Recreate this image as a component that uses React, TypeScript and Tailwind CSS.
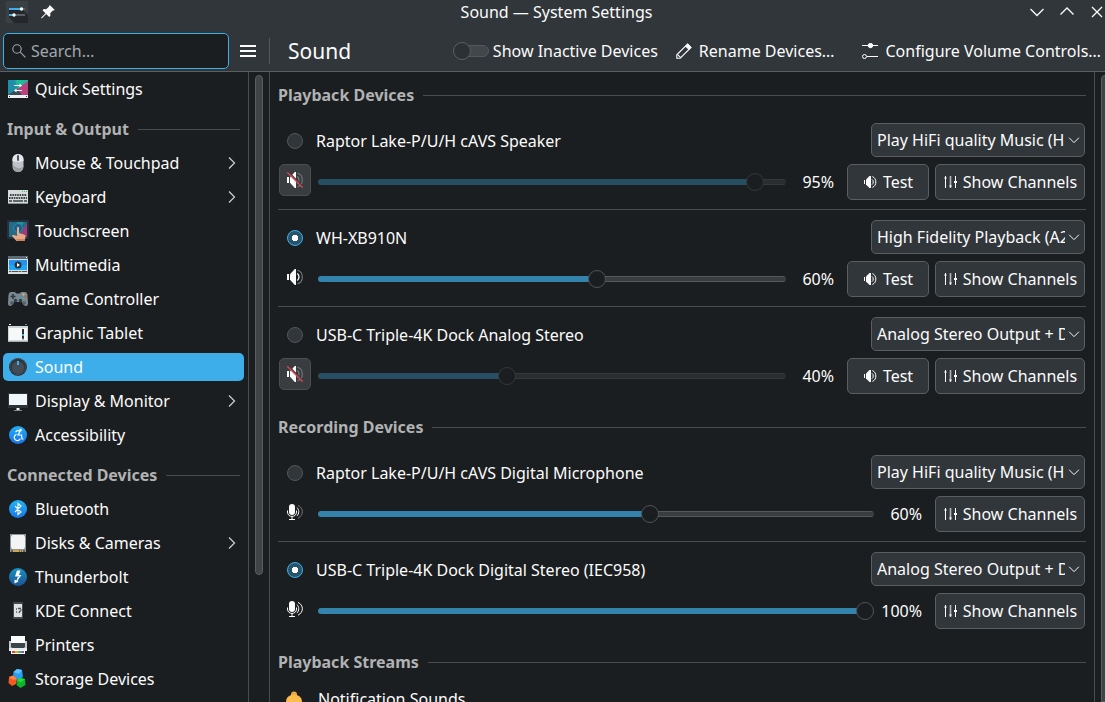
import React, { useState } from 'react';
import clsx from 'clsx';

type IconProps = { className?: string };

/* ---------- monochrome icons ---------- */

const Chevron = ({ dir }: { dir: 'up' | 'down' | 'right' }) => {
  const paths = {
    up: 'M1.5 10.5 8 4l6.5 6.5',
    down: 'M1.5 5 8 11.5 14.5 5',
    right: 'M5 2.5 10.5 8 5 13.5',
  };
  return (
    <svg viewBox="0 0 16 16" className="w-full h-full" fill="none" stroke="currentColor" strokeWidth="1.3">
      <path d={paths[dir]} />
    </svg>
  );
};

const PinIcon = () => (
  <svg viewBox="0 0 16 16" className="w-4 h-4" fill="#fcfcfc">
    <path d="M10 1.2 14.8 6l-1.3.6-.6-.2-2.7 2.8.2 2.5-1.2 1.2-3-3L2 14.2l-.8.1.1-.8 4.2-4.3-3-3 1.3-1.2 2.4.2 2.9-2.8-.2-.6Z" />
  </svg>
);

const PencilIcon = () => (
  <svg viewBox="0 0 16 16" className="w-4 h-4" fill="none" stroke="#fcfcfc" strokeWidth="1.1">
    <path d="M.8 15.2v-3.4L11.6 1 15 4.4 4.2 15.2H.8Z" />
    <path d="m9.6 3 3.4 3.4M1.6 11.6l2.8 2.8" />
    <path d="m11.8 1.4 2.8 2.8-1.4 1.5-2.9-2.8z" fill="#fcfcfc" />
  </svg>
);

const ConfigureIcon = () => (
  <svg viewBox="0 0 16 16" className="w-4 h-4" fill="none" stroke="#fcfcfc">
    <path d="M0 2.5h16M5 13.5h11" />
    <circle cx="8.5" cy="2.5" r="2.2" fill="#fcfcfc" />
    <circle cx="2.5" cy="13.5" r="2" />
  </svg>
);

const SearchIcon = ({ className }: IconProps) => (
  <svg viewBox="0 0 16 16" className={className} fill="none" stroke="currentColor" strokeWidth="1.1">
    <circle cx="6" cy="6" r="4.2" />
    <path d="m9.2 9.2 5.2 5.2" />
  </svg>
);

const SpeakerIcon = ({ muted }: { muted?: boolean }) => (
  <svg viewBox="0 0 16 16" className="w-4 h-4" fill="none">
    <path d="M0 5h2v6H0z" fill="#fcfcfc" />
    <path d="M3 5.2 7.8 0H9v16H7.8L3 10.8z" fill="#fcfcfc" />
    <path d="M10.2 4.5c2.4 1.6 2.4 5.4 0 7" stroke={muted ? '#75797c' : '#fcfcfc'} strokeWidth="1.3" />
    <path d="M10.5 1.2c6.4 1.6 6.4 12 0 13.6" stroke="#75797c" strokeWidth="1.1" />
    {muted && (
      <>
        <path d="m1.500 0 14.500 14.500" stroke="#3a3d3f" strokeWidth="1.4" />
        <path d="m.3.3 15.4 15.4" stroke="#da4453" strokeWidth="1.3" />
      </>
    )}
  </svg>
);

const MicIcon = ({ loud }: { loud: boolean }) => (
  <svg viewBox="0 0 16 16" className="w-4 h-4" fill="none" stroke="#fcfcfc">
    <rect x="2" y="0" width="6" height="11" rx="3" fill="#fcfcfc" stroke="none" />
    <path d="M.5 6.500V8c0 5.900 9 5.900 9 0V6.500M5 12.500v3M2 15.500h6" />
    <path d="M9.800 3.500c2.600 1.800 2.600 6.600 0 8.600" />
    <path d="M11 1.400c5.800 2.600 5.800 10 0 12.800" stroke={loud ? '#fcfcfc' : '#75797c'} />
  </svg>
);

const TestIcon = () => (
  <svg viewBox="0 0 16 16" className="w-4 h-4" fill="none" stroke="#fcfcfc">
    <path d="M1.5 6v4" />
    <path d="M3 5.500 6.500 2H8v12H6.500L3 10.500z" fill="#fcfcfc" stroke="none" />
    <path d="M9 5.400c1.700 1 1.700 4.200 0 5.200M9.400 2.600c4.600 1.600 4.600 9.200 0 10.800" />
  </svg>
);

const ChannelsIcon = () => (
  <svg viewBox="0 0 16 16" className="w-4 h-4" fill="none" stroke="#fcfcfc">
    <path d="M2.5 2v12M12.5 2v12" />
    <path d="M7.500 2v12" stroke="#b4b7b9" strokeWidth="1.6" />
    <path d="m1 4.500 1.500-2.200L4 4.500zM6 11.500l1.500 2.200L9 11.500z" fill="#fcfcfc" stroke="none" />
    <path d="M11 8h3" strokeWidth="2" />
  </svg>
);

/* ---------- coloured sidebar icons ---------- */

const Disc = ({ id, from, to, children }: { id: string; from: string; to: string; children: React.ReactNode }) => (
  <>
    <defs>
      <linearGradient id={id} x1="0" y1="0" x2="0" y2="1">
        <stop stopColor={from} />
        <stop offset="1" stopColor={to} />
      </linearGradient>
    </defs>
    <circle cx="11" cy="11" r="9" fill={`url(#${id})`} />
    {children}
  </>
);

const glyphs: Record<string, React.ReactNode> = {
  'Quick Settings': (
    <>
      <path d="M1 2h20v15H1z" fill="#1f8fa8" />
      <path d="M8 2h13v2L11 11z" fill="#1abc9c" />
      <path d="M21 3v14h-8l-3-6z" fill="#b8417f" />
      <path d="m1 17 9-6 5 6z" fill="#3b4a55" />
      <path d="M1 17h20v3H1z" fill="#eff0f1" />
      <path d="M2 18.5h1M19 18.5h1" stroke="#31363b" />
      <path d="M7 7.5h7M8 12.5h7" stroke="#fff" strokeWidth="1.2" />
      <path d="M12.5 5.5 15 7.5l-2.5 2zM9.5 10.5 7 12.5l2.5 2z" fill="#fff" />
    </>
  ),
  'Mouse & Touchpad': (
    <>
      <rect x="5.5" y="2" width="11" height="18" rx="5.5" fill="#bfc3c8" />
      <path d="M5.5 9V7.5a5.5 5.5 0 0 1 11 0V9q-5.5 2-11 0" fill="#e4e6e8" />
      <path d="M6 13q0 7 5 7 5 0 5.500-6-5 5-10.500-1" fill="#9aa0a6" />
      <rect x="10" y="3" width="2" height="6" rx="1" fill="#4a5663" />
    </>
  ),
  Keyboard: (
    <>
      <path d="M1 4h20v14H1z" fill="#d6dbd9" />
      <path d="M1 17h20v1H1z" fill="#8b9391" />
      <path d="M15 5.5h5" stroke="#2ecc71" strokeDasharray="1 1" />
      <path d="M3 9h17M2 12h18" stroke="#3a4446" strokeWidth="2" strokeDasharray="1.6 .8" />
      <path d="M2 15h3M6 15h10M17 15h3" stroke="#3a4446" strokeWidth="1.6" />
    </>
  ),
  Touchscreen: (
    <>
      <rect x="0" y="0" width="22" height="19" rx="1" fill="#22303f" />
      <path d="M2 2h18v15H2z" fill="#256b83" />
      <path d="M10 2h7l-6 8z" fill="#1d9a8a" />
      <path d="M20 3v14h-8z" fill="#a03a78" />
      <circle cx="11" cy="8" r="4.5" fill="#1f5f8c" stroke="#2f86b5" />
      <path d="M10 7.5q1-1.5 2 0V13l5 1.5q2 .5 1.5 3L17.5 21h-8L5 16q0-1.5 2-1l3 1z" fill="#e8a987" />
      <path d="M9 19h9l-.5 2h-7z" fill="#c98462" />
    </>
  ),
  Multimedia: (
    <>
      <path d="M1 2h20v3H1z" fill="#5d6b75" />
      <path d="M19 3h1v1h-1z" fill="#fff" />
      <path d="M1 5h20v15H1z" fill="#d9dfe2" />
      <path d="M2 6h18v10H2z" fill="#2491ef" />
      <path d="M2 11h18v5H2z" fill="#1fa8f6" />
      <path d="M2 17.5h18" stroke="#46535c" strokeDasharray="2 .6 7 .6" />
      <circle cx="11" cy="11" r="3.5" fill="#26333d" />
      <path d="m10 9 3 2-3 2z" fill="#fff" />
    </>
  ),
  'Game Controller': (
    <>
      <path d="M4 4h4l1 1.5h4L14 4h4q2 0 2.5 3l.5 8q0 3-2 3-2.5 0-4-4H7q-1.5 4-4 4-2 0-2-3l.5-8Q2 4 4 4" fill="#7b8792" />
      <path d="M3 16q0-3 2-3l2 1q-1.5 4-4 2M19 16q0-3-2-3l-2 1q1.5 4 4 2" fill="#56616b" />
      <path d="M6 6v5M3.5 8.5h5" stroke="#2d3841" strokeWidth="1.6" />
      <circle cx="16.5" cy="6.5" r="1.1" fill="#e6c34a" />
      <circle cx="16.5" cy="10.5" r="1.1" fill="#3bbf72" />
      <circle cx="14.5" cy="8.5" r="1.1" fill="#3d8fd6" />
      <circle cx="18.5" cy="8.5" r="1.1" fill="#d94e4e" />
      <circle cx="8.5" cy="12.5" r="1.7" fill="#303b44" />
      <circle cx="13.5" cy="12.5" r="1.7" fill="#303b44" />
    </>
  ),
  'Graphic Tablet': (
    <>
      <path d="M1 4h20v16H1z" fill="#cfd4d7" />
      <path d="M2 6h18v12H2z" fill="#f7f8f8" />
      <path d="M2 2.5h2" stroke="#fff" />
      <path d="M18 2.5h2" stroke="#3d8fd6" />
      <path d="M15 7h2v9l-1 2-1-2z" fill="#26323c" />
      <path d="M15 12h2v2h-2z" fill="#3daee9" />
      <path d="M1 19h20v1H1z" fill="#a9b0b4" />
    </>
  ),
  Sound: (
    <>
      <circle cx="11" cy="11" r="9" fill="#2c343c" />
      <circle cx="11" cy="10.5" r="7.8" fill="none" stroke="#606b75" strokeDasharray="1 1.2" />
      <circle cx="11" cy="11.5" r="6.2" fill="#434d57" />
      <path d="M11 5v4" stroke="#3daee9" strokeWidth="2" />
    </>
  ),
  'Display & Monitor': (
    <>
      <path d="M1 3h20v15H1z" fill="#2b3238" />
      <path d="M2 4h18v11H2z" fill="#f1f8fc" />
      <path d="M9.5 18h3v2h-3z" fill="#f4f5f6" />
      <path d="M7 20.5h8" stroke="#7f8c8d" />
    </>
  ),
  Accessibility: (
    <Disc id="a11y" from="#1fb0f5" to="#1b72e8">
      <g fill="none" stroke="#fff" strokeWidth="1.2">
        <circle cx="13.5" cy="6" r=".7" fill="#fff" />
        <path d="m8.5 8 2-1.5 2.5 1-2 3.5h3.500l.5 4h1.500" />
        <path d="M9.5 10.3a3.200 3.200 0 1 0 3.800 4.500" />
      </g>
    </Disc>
  ),
  Bluetooth: (
    <Disc id="bt" from="#1fb4f6" to="#1b76e8">
      <path d="m8 8 6 6-3 2.5v-11L14 8l-6 6" fill="none" stroke="#fff" strokeWidth="1.1" />
    </Disc>
  ),
  'Disks & Cameras': (
    <>
      <path d="M3 2h16v18H3z" fill="#8d9599" />
      <path d="M5 3h12l1 2v10l-1 2H5l-1-2V5z" fill="#f3f5f5" />
      <path d="M4 18h14v2H4z" fill="#5a6266" />
      <path d="M6 19h10" stroke="#fdbc4b" strokeWidth="1.5" strokeDasharray="6 .8 1.4 .8" />
    </>
  ),
  Thunderbolt: (
    <Disc id="tb" from="#1692c4" to="#1e5394">
      <path d="M10 4.500h3.500L12 9h2.500l-4 5.500 1.300-4H8z" fill="#fff" />
      <path d="m11.500 11-2 5" stroke="#fff" strokeWidth="1.2" />
      <path d="M7.5 13.500v4l4-2z" fill="#fff" />
    </Disc>
  ),
  'KDE Connect': (
    <>
      <rect x="6" y="2" width="10" height="17" rx="1" fill="#42494d" />
      <path d="M7 4h8v13H7z" fill="#dde1e2" />
      <path d="M9 9h1M11 8.5h3M9 12h1M13 11l-1 2" stroke="#4d5559" strokeWidth="1.4" />
      <path d="M14 9v2l-2 .5" fill="none" stroke="#4d5559" />
    </>
  ),
  Printers: (
    <>
      <path d="M4 2h14v8H4z" fill="#fafbfb" />
      <path d="M2 7h2v3h14V7h2v8H2z" fill="#c6cacc" />
      <path d="M4 9h14v4l-1 1H5l-1-1z" fill="#3b454c" />
      <path d="M2 14h18v3H2z" fill="#e9ebec" />
      <path d="M4 16h14v4H4z" fill="#fff" />
      <path d="M5 18h3" stroke="#e8413b" strokeWidth="2" />
      <path d="M8 18h3" stroke="#f5a623" strokeWidth="2" />
      <path d="M11 18h3" stroke="#3cc55f" strokeWidth="2" />
      <path d="M14 18h3" stroke="#7a5be0" strokeWidth="2" />
    </>
  ),
  'Storage Devices': (
    <>
      <path d="m10 1 5 1 1 7-5 3-5-3 .5-5z" fill="#2a9df4" />
      <path d="m10 1 5 1-3 4-5.5-2z" fill="#5fc3ff" />
      <path d="m2 9 4-1.5L10 11l-1 5-4 2-3.5-3z" fill="#f4591f" />
      <path d="m2 9 4-1.5L10 11l-4 1z" fill="#ff8442" />
      <path d="m13 10 5 1 .5 6-5 3-4-3 .5-5z" fill="#11b32a" />
      <path d="m13 10 5 1-4 3.5-4-2.5z" fill="#22dd3e" />
    </>
  ),
};

/* ---------- sidebar ---------- */

const sidebar = [
  { title: '', items: [{ name: 'Quick Settings' }] },
  {
    title: 'Input & Output',
    items: [
      { name: 'Mouse & Touchpad', sub: true },
      { name: 'Keyboard', sub: true },
      { name: 'Touchscreen' },
      { name: 'Multimedia' },
      { name: 'Game Controller' },
      { name: 'Graphic Tablet' },
      { name: 'Sound' },
      { name: 'Display & Monitor', sub: true },
      { name: 'Accessibility' },
    ],
  },
  {
    title: 'Connected Devices',
    items: [
      { name: 'Bluetooth' },
      { name: 'Disks & Cameras', sub: true },
      { name: 'Thunderbolt' },
      { name: 'KDE Connect' },
      { name: 'Printers' },
      { name: 'Storage Devices' },
    ],
  },
] as { title: string; items: { name: string; sub?: boolean }[] }[];

function Sidebar() {
  return (
    <nav className="w-[248px] shrink-0 overflow-hidden">
      {sidebar.map((group) => (
        <section key={group.title}>
          {group.title && (
            <div className="h-10 pt-1.5 pl-[7px] pr-2 flex items-center gap-[9px]">
              <h2 className="font-bold text-[#b0b2b3] whitespace-nowrap">{group.title}</h2>
              <div className="flex-1 h-px bg-[#4a4d4f]"></div>
            </div>
          )}
          <ul>
            {group.items.map((item) => (
              <li key={item.name} className="h-[34px] pl-[3px] pr-1 py-[3px]">
                <a
                  href="#"
                  className={clsx(
                    'h-7 pl-1 pr-1 flex items-center gap-1.5 rounded-[5px] whitespace-nowrap',
                    item.name === 'Sound' && 'bg-[#3daee9]'
                  )}
                >
                  <svg viewBox="0 0 22 22" className="w-[22px] h-[22px] shrink-0">
                    {glyphs[item.name]}
                  </svg>
                  {item.name}
                  {item.sub && (
                    <span className="ml-auto w-4 h-4 text-[#c8cacb]">
                      <Chevron dir="right" />
                    </span>
                  )}
                </a>
              </li>
            ))}
          </ul>
        </section>
      ))}
    </nav>
  );
}

/* ---------- sound page ---------- */

type Device = {
  name: string;
  profile: string;
  volume: number;
  muted?: boolean;
  active?: boolean;
};

const playback: Device[] = [
  { name: 'Raptor Lake-P/U/H cAVS Speaker', profile: 'Play HiFi quality Music (H', volume: 95, muted: true },
  { name: 'WH-XB910N', profile: 'High Fidelity Playback (A2', volume: 60, active: true },
  { name: 'USB-C Triple-4K Dock Analog Stereo', profile: 'Analog Stereo Output + D', volume: 40, muted: true },
];

const recording: Device[] = [
  { name: 'Raptor Lake-P/U/H cAVS Digital Microphone', profile: 'Play HiFi quality Music (H', volume: 60 },
  { name: 'USB-C Triple-4K Dock Digital Stereo (IEC958)', profile: 'Analog Stereo Output + D', volume: 100, active: true },
];

function SectionTitle({ children }: { children: React.ReactNode }) {
  return (
    <div className="h-6 flex items-center gap-[9px]">
      <h2 className="font-bold text-[#b0b2b3] whitespace-nowrap">{children}</h2>
      <div className="flex-1 h-px bg-[#4a4d4f]"></div>
    </div>
  );
}

function PushButton({ icon, label, className }: { icon: React.ReactNode; label: string; className: string }) {
  return (
    <button
      className={clsx(
        'h-9 shrink-0 flex items-center justify-center gap-1 rounded-[5px] border border-[#5b5f62] bg-[#31363b] whitespace-nowrap',
        className
      )}
    >
      {icon}
      {label}
    </button>
  );
}

function VolumeSlider({ device }: { device: Device }) {
  const [value, setValue] = useState(device.volume);
  // the thumb is 18px wide, so its centre travels between 9px and 100% - 9px
  const fill = { '--fill': `calc(9px + (100% - 18px) * ${value / 100})` } as React.CSSProperties;

  return (
    <>
      <input
        type="range"
        aria-label={`${device.name} volume`}
        value={value}
        onChange={(e) => setValue(Number(e.target.value))}
        style={fill}
        className={clsx(
          'flex-1 min-w-0 h-[18px] appearance-none bg-transparent',
          '[&::-webkit-slider-runnable-track]:h-1.5 [&::-webkit-slider-runnable-track]:rounded-full',
          '[&::-webkit-slider-runnable-track]:bg-no-repeat [&::-webkit-slider-runnable-track]:bg-size-[var(--fill)_100%,100%_100%]',
          '[&::-webkit-slider-thumb]:appearance-none [&::-webkit-slider-thumb]:w-[18px] [&::-webkit-slider-thumb]:h-[18px] [&::-webkit-slider-thumb]:-mt-1.5',
          '[&::-webkit-slider-thumb]:rounded-full [&::-webkit-slider-thumb]:border [&::-webkit-slider-thumb]:bg-[#1b1e20]',
          device.muted
            ? '[&::-webkit-slider-runnable-track]:bg-[image:linear-gradient(#264f64,#264f64),linear-gradient(#36393b_1px,#2a2d2f_1px,#2a2d2f_5px,#36393b_5px)] [&::-webkit-slider-thumb]:border-[#36393b]'
            : '[&::-webkit-slider-runnable-track]:bg-[image:linear-gradient(#3483ac,#3483ac),linear-gradient(#56595b_1px,#3a3d3f_1px,#3a3d3f_5px,#56595b_5px)] [&::-webkit-slider-thumb]:border-[#505355]'
        )}
      />
      <span className="w-[61px] shrink-0 pr-[13px] text-right">{value}%</span>
    </>
  );
}

function DeviceRow({ device, group }: { device: Device; group: 'playback' | 'recording' }) {
  return (
    <div className="px-px flex flex-col gap-[7px]">
      <div className="h-[34px] flex items-center justify-between">
        <label className="pl-2 pt-0.5 flex items-center gap-[13px] whitespace-nowrap">
          <input
            type="radio"
            name={group}
            defaultChecked={device.active}
            className="appearance-none w-4 h-4 rounded-full border border-[#53575a] bg-[#31363b] checked:border-[#3daee9] checked:bg-[radial-gradient(circle,#fcfcfc_3px,#27546b_3.5px)]"
          />
          {device.name}
        </label>
        <div className="relative w-[214px] shrink-0">
          <select
            aria-label={`${device.name} profile`}
            className="block w-full h-[34px] pl-[5px] pr-[19px] appearance-none rounded-[5px] border border-[#5b5f62] bg-[#31363b]"
          >
            <option>{device.profile}</option>
          </select>
          <span className="absolute right-[5px] top-[11px] w-3 h-3 pointer-events-none">
            <Chevron dir="down" />
          </span>
        </div>
      </div>

      <div className="h-9 flex items-start">
        <button
          aria-label="Mute"
          className={clsx(
            'w-8 h-8 mr-[7px] shrink-0 flex items-center justify-center rounded-[5px]',
            device.muted && 'border border-[#4b4e50] bg-[#3a3d3f]'
          )}
        >
          {group === 'playback' ? <SpeakerIcon muted={device.muted} /> : <MicIcon loud={device.volume === 100} />}
        </button>
        <div className="flex-1 h-9 flex items-center">
          <VolumeSlider device={device} />
          <div className="flex gap-1.5">
            {group === 'playback' && <PushButton icon={<TestIcon />} label="Test" className="w-[82px]" />}
            <PushButton icon={<ChannelsIcon />} label="Show Channels" className="w-[150px]" />
          </div>
        </div>
      </div>
    </div>
  );
}

function DeviceList({ devices, group }: { devices: Device[]; group: 'playback' | 'recording' }) {
  return (
    <div className="pt-4 pb-[21px]">
      {devices.map((device, i) => (
        <React.Fragment key={device.name}>
          {i > 0 && <div className="h-px mt-[9px] mb-2.5 bg-[#4a4d4f]"></div>}
          <DeviceRow device={device} group={group} />
        </React.Fragment>
      ))}
    </div>
  );
}

/* ---------- window ---------- */

function TitleBar() {
  return (
    <div className="h-6 pl-2 grid grid-cols-[1fr_auto_1fr] items-center">
      <div className="-ml-0.5 flex items-center gap-3">
        <svg viewBox="0 0 22 22" className="w-[22px] h-[22px]">
          <rect width="22" height="22" rx="1" fill="#3b4045" />
          <path d="m3 9 3-2 10 1 6 6v8H8l-5-6z" fill="#24282c" />
          <path d="M3 8h12" stroke="#3daee9" strokeWidth="2" />
          <path d="M16 8h3M8 14h11" stroke="#5a6066" strokeWidth="2" />
          <path d="M3 14h5" stroke="#3daee9" strokeWidth="2" />
          <circle cx="15.5" cy="8" r="1.7" fill="#fff" />
          <circle cx="8" cy="14" r="1.7" fill="#fff" />
        </svg>
        <PinIcon />
      </div>
      <h1>Sound — System Settings</h1>
      <div className="flex justify-end gap-3.5">
        <button aria-label="Minimize" className="w-4 h-4">
          <Chevron dir="down" />
        </button>
        <button aria-label="Maximize" className="w-4 h-4">
          <Chevron dir="up" />
        </button>
        <button aria-label="Close" className="w-4 h-4">
          <svg viewBox="0 0 16 16" className="w-4 h-4" stroke="currentColor" strokeWidth="1.3">
            <path d="m3 3 10 10M13 3 3 13" />
          </svg>
        </button>
      </div>
    </div>
  );
}

function Toolbar() {
  return (
    <div className="h-[47px] pt-px pl-[3px] pr-1 flex items-center whitespace-nowrap">
      <div className="relative w-[226px] h-full pt-2 shrink-0">
        <input
          type="text"
          aria-label="Search"
          placeholder="Search…"
          className="block w-full h-9 pl-[27px] pr-2 rounded-[5px] border border-[#3daee9] bg-[#1b1e20] placeholder:text-[#a1a9b1] outline-none"
        />
        <SearchIcon className="absolute left-2 top-[18px] w-4 h-4 text-[#a1a9b1]" />
      </div>
      <button aria-label="Menu" className="w-4 mt-1.5 ml-[11px] flex flex-col gap-[3px]">
        <span className="w-4 h-0.5 bg-[#fcfcfc]"></span>
        <span className="w-4 h-0.5 bg-[#fcfcfc]"></span>
        <span className="w-4 h-0.5 bg-[#fcfcfc]"></span>
      </button>
      <div className="w-px h-[26px] mt-1.5 ml-[13px] bg-[#54585c]"></div>
      <h1 className="mt-1.5 ml-[18px] text-[21px] leading-7">Sound</h1>

      <div className="ml-auto mt-1.5 flex items-center gap-[18px]">
        <label className="flex items-center gap-1">
          <input type="checkbox" role="switch" className="peer sr-only" />
          <span className="w-9 h-[18px] flex items-center">
            <span className="w-[18px] h-[18px] shrink-0 rounded-full border border-[#5b5f63] bg-[#2c3135] z-10"></span>
            <span className="w-7 h-3 -ml-2.5 rounded-full border border-[#54585c] bg-[#42474b]"></span>
          </span>
          Show Inactive Devices
        </label>
        <button className="flex items-center gap-[7px]">
          <PencilIcon />
          Rename Devices…
        </button>
        <button className="ml-2.5 flex items-center gap-[7px]">
          <ConfigureIcon />
          Configure Volume Controls…
        </button>
      </div>
    </div>
  );
}

export default function App() {
  return (
    <div className="h-screen flex flex-col overflow-hidden bg-[#1b1e20] text-[#fcfcfc] text-base leading-6 font-['Noto_Sans',sans-serif]">
      <header className="shrink-0 bg-[#31363b] border-b border-[#5b5f63]">
        <TitleBar />
        <Toolbar />
      </header>

      <div className="flex-1 min-h-0 flex">
        <Sidebar />
        <div className="w-[22px] shrink-0 border-x border-[#4a4d4f] pt-[3px] flex justify-center">
          <div className="w-2 h-[500px] rounded-full border border-[#5a5d5f] bg-[#414446]"></div>
        </div>

        <main className="flex-1 min-w-0 px-2 pt-[11px] overflow-hidden">
          <SectionTitle>Playback Devices</SectionTitle>
          <DeviceList devices={playback} group="playback" />
          <SectionTitle>Recording Devices</SectionTitle>
          <DeviceList devices={recording} group="recording" />
          <SectionTitle>Playback Streams</SectionTitle>
          <div className="pt-[13px] pl-2 flex items-start gap-4">
            <svg viewBox="0 0 16 22" className="w-4 h-[22px] mt-1 shrink-0">
              <circle cx="8" cy="3.5" r="3" fill="#f0a93c" />
              <path d="M0 15V11q0-7 8-7.500 8 .5 8 7.500v8H0z" fill="#fdbc4b" />
            </svg>
            <span>Notification Sounds</span>
          </div>
        </main>

        <div className="w-[11px] shrink-0 border-l border-[#4a4d4f] pt-[3px] pl-1.5 overflow-hidden">
          <div className="w-2 h-full rounded-t-full border border-[#5a5d5f] bg-[#414446]"></div>
        </div>
      </div>
    </div>
  );
}
